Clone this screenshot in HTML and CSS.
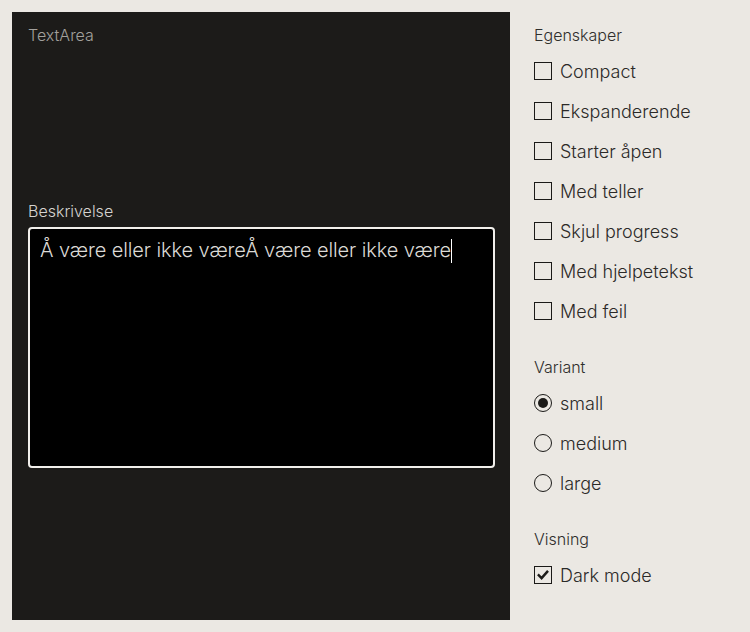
FILE: index.html
```html
<!DOCTYPE html>
<html lang="no">
<head>
<meta charset="utf-8">
<link rel="stylesheet" href="styles.css">
</head>
<body>
<div class="page">
  <section class="preview">
    <div class="preview-title">TextArea</div>
    <div class="field">
      <label class="field-label">Beskrivelse</label>
      <div class="textarea"><span class="value">Å være eller ikke væreÅ være eller ikke være</span><span class="caret"></span></div>
    </div>
  </section>
  <aside class="controls">
    <div class="group">
      <div class="group-title">Egenskaper</div>
      <div class="option"><span class="box"></span><span class="opt-label">Compact</span></div>
      <div class="option"><span class="box"></span><span class="opt-label">Ekspanderende</span></div>
      <div class="option"><span class="box"></span><span class="opt-label">Starter åpen</span></div>
      <div class="option"><span class="box"></span><span class="opt-label">Med teller</span></div>
      <div class="option"><span class="box"></span><span class="opt-label">Skjul progress</span></div>
      <div class="option"><span class="box"></span><span class="opt-label">Med hjelpetekst</span></div>
      <div class="option"><span class="box"></span><span class="opt-label">Med feil</span></div>
    </div>
    <div class="group">
      <div class="group-title">Variant</div>
      <div class="option"><span class="radio checked"></span><span class="opt-label">small</span></div>
      <div class="option"><span class="radio"></span><span class="opt-label">medium</span></div>
      <div class="option"><span class="radio"></span><span class="opt-label">large</span></div>
    </div>
    <div class="group">
      <div class="group-title">Visning</div>
      <div class="option"><span class="box checked"><svg viewBox="0 0 16 16" width="14" height="14"><path d="M3.2 8.4 L6.4 11.6 L12.8 4.4" fill="none" stroke="#1b1a18" stroke-width="2.8" stroke-linecap="square" stroke-linejoin="miter"/></svg></span><span class="opt-label">Dark mode</span></div>
    </div>
  </aside>
</div>
</body>
</html>
```
FILE: styles.css
```css
* { box-sizing: border-box; }
html, body { margin: 0; padding: 0; }
body {
  background: #ebe8e3;
  font-family: Inter, "Liberation Sans", sans-serif;
  color: #2b2a28;
}
.page {
  display: flex;
  gap: 24px;
  padding: 12px;
  height: 632px;
}
.preview {
  width: 498px;
  height: 608px;
  background: #1c1b19;
  padding: 12px 16px;
  display: flex;
  flex-direction: column;
}
.preview-title {
  font-size: 16px;
  line-height: 22px;
  color: #a3a19d;
  font-weight: 300;
}
.field {
  margin-top: 154px;
  display: flex;
  flex-direction: column;
}
.field-label {
  font-size: 16px;
  line-height: 22px;
  color: #d6d4d0;
  font-weight: 300;
  margin-bottom: 5px;
}
.textarea {
  width: 467px;
  height: 241px;
  background: #000;
  border: 2px solid #f2f0ec;
  border-radius: 4px;
  padding: 8px 10px;
  font-size: 20px;
  line-height: 26px;
  letter-spacing: -0.1px;
  color: #dcdad6;
  font-weight: 300;
}
.caret {
  display: inline-block;
  width: 1px;
  height: 24px;
  background: #fff;
  vertical-align: -6px;
}
.controls {
  display: flex;
  flex-direction: column;
  padding-top: 12px;
}
.group { display: flex; flex-direction: column; margin-bottom: 16px; }
.group + .group { margin-top: 9px; }
.group-title {
  font-size: 16px;
  line-height: 22px;
  color: #2f2e2c;
  font-weight: 300;
  margin-bottom: 5px;
}
.option {
  display: flex;
  align-items: center;
  gap: 8px;
  height: 40px;
}
.opt-label {
  font-size: 18px;
  color: #2b2a28;
  font-weight: 300;
}
.box {
  width: 18px;
  height: 18px;
  border: 1.5px solid #1b1a18;
  display: flex;
  align-items: center;
  justify-content: center;
}
.radio {
  width: 18px;
  height: 18px;
  border: 1.5px solid #1b1a18;
  border-radius: 50%;
  display: flex;
  align-items: center;
  justify-content: center;
}
.radio.checked::after {
  content: "";
  width: 10px;
  height: 10px;
  border-radius: 50%;
  background: #1b1a18;
}
```
